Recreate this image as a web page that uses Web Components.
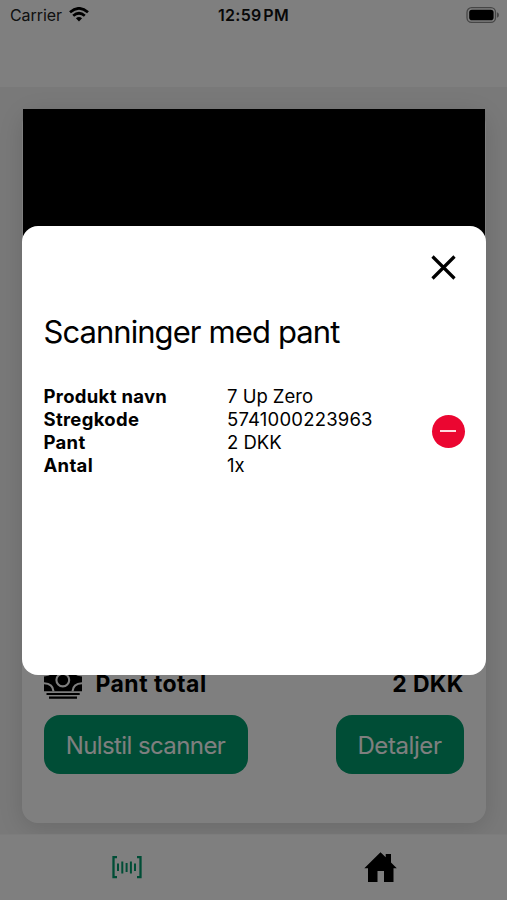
<!DOCTYPE html>
<html lang="da">
<head>
<meta charset="utf-8">
<title>Pant scanner</title>
<style>
html,body{margin:0;height:100%}
body{font-family:Inter,"Liberation Sans",sans-serif;color:#000;overflow:hidden}
</style>
</head>
<body>
<pant-app></pant-app>
<script>
const define = (name, html) => customElements.define(name, class extends HTMLElement {
  constructor() {
    super();
    this.attachShadow({mode: 'open'}).innerHTML = html;
  }
});

define('status-bar', `
<style>
:host{display:grid;grid-template-columns:1fr auto 1fr;align-items:center;height:30px;padding:0 8px 0 10px;font-size:16px;color:#000}
.left{display:flex;align-items:center;gap:7px}
.carrier{letter-spacing:-.08px;color:#222}
.time{font-weight:600;letter-spacing:.3px;word-spacing:-2.6px;color:#111;margin-right:2px}
svg{display:block;margin-top:-1px}
.battery{justify-self:end}
</style>
<div class="left"><span class="carrier">Carrier</span>
<svg width="20" height="15" viewBox="0 0 20 15" fill="none" stroke="#000" stroke-width="2.7"><path d="M1 5.3Q10-2.6 19 5.3"/><path d="M4.2 8.8Q10 3.7 15.8 8.8"/><path d="M6.9 11.2Q10 8.7 13.1 11.2L10 14.4Z" fill="#000" stroke="none"/></svg></div>
<span class="time">12:59 PM</span>
<svg class="battery" width="33" height="16" viewBox="0 0 33 16"><rect x="1" y=".7" width="28.5" height="14.6" rx="4.6" fill="none" stroke="#8c8c8c" stroke-width="1.3"/><rect x="3.2" y="2.8" width="24.4" height="10.4" rx="2.8"/><path d="M31 5.3Q33 6 33 8T31 10.7Z" fill="#8c8c8c"/></svg>`);

define('app-header', `
<style>:host{display:block;height:87px;box-sizing:border-box;background:#fff}</style><slot></slot>`);

define('pant-button', `
<style>
:host{display:flex;align-items:center;justify-content:center;box-sizing:border-box;height:59px;width:var(--w);padding-top:2px;background:#009b6c;color:#fff;border-radius:16px;font-size:24px;font-weight:400;letter-spacing:var(--ls,0)}
</style><slot></slot>`);

define('cash-icon', `
<style>:host{display:block;width:38px;height:31px}svg{display:block;margin-top:-1px}</style>
<svg width="38" height="31" viewBox="0 0 38 31"><path d="M0 0H38V23.3H0Z"/><g fill="none" stroke="#fff" stroke-width="2.1"><circle cx="18.8" cy="12" r="6.4"/><path d="M0 15.2Q9 15.5 9.5 23.3M38 15.2Q29 15.5 28.5 23.3M0 7.5Q9 7 9.5 0M38 7.5Q29 7 28.5 0"/></g><path d="M2.5 24.9H35.7V27H2.5ZM5 28.5H33V30.8H5Z"/></svg>`);

define('scanner-card', `
<style>
:host{display:flex;flex-direction:column;box-sizing:border-box;width:464px;height:714px;margin:22px auto 0;background:#fff;border-radius:16px;box-shadow:0 5px 24px rgba(0,0,0,.13)}
.camera{height:480px;margin:0 1px;background:#000}
.total{display:flex;align-items:center;height:34px;margin:78px 22px 0;font-size:23px;font-weight:700}
.total span{margin-left:14px;letter-spacing:.45px}
.total b{margin-left:auto;font-weight:700;letter-spacing:.3px}
.actions{display:flex;justify-content:space-between;margin:14px 22px 0}
</style>
<div class="camera"></div>
<div class="total"><cash-icon></cash-icon><span>Pant total</span><b>2 DKK</b></div>
<div class="actions"><pant-button style="--w:204px;--ls:-.6px">Nulstil scanner</pant-button><pant-button style="--w:128px;--ls:-.4px">Detaljer</pant-button></div>`);

define('tab-bar', `
<style>
:host{display:grid;grid-template-columns:1fr 1fr;justify-items:center;height:66px;box-sizing:border-box;background:#fff;border-top:1px solid #f8f8f8;padding-top:15px}
svg{display:block}
</style>
<svg width="34" height="34" viewBox="0 0 34 34" fill="none" stroke="#009b6c" stroke-width="2"><path d="M7 7.2H3.5V27.2H7M27 7.2H30.5V27.2H27" stroke-width="2.3"/><path d="M8 13.5V21M12.3 11.5V23.5M16.6 13V22M20.9 11.5V23.5M25 13.5V21"/></svg>
<svg width="34" height="34" viewBox="0 0 34 34"><path d="M1.3 18.3L17.5 2.3L22.7 7.3V4H28V12.5L33.8 18.3H30.5V32H21V21H14.5V32H5V18.3Z"/></svg>`);

define('remove-button', `
<style>:host{display:flex;width:33px;height:33px;border-radius:50%;background:#eb0631;align-items:center;justify-content:center}i{width:15.5px;height:2px;background:#ffd9e0}</style><i></i>`);

define('scan-item', `
<style>
:host{display:flex;align-items:center;justify-content:space-between}
dl{display:grid;grid-template-columns:183.5px auto;margin:0;font-size:18.5px;line-height:23px}
dt{font-weight:650;letter-spacing:.3px}dd{margin:0;letter-spacing:-.02px}
.code{letter-spacing:.2px}
dt,dd{white-space:nowrap}
</style>
<dl><dt>Produkt navn</dt><dd>7 Up Zero</dd><dt>Stregkode</dt><dd class="code">5741000223963</dd><dt>Pant</dt><dd>2 DKK</dd><dt>Antal</dt><dd>1x</dd></dl>
<remove-button></remove-button>`);

define('modal-dialog', `
<style>
:host{display:block;box-sizing:border-box;width:464px;height:449px;background:#fff;border-radius:16px;padding:29px 21.5px 0}
.close{display:block;margin:0 9px 0 auto}
h1{margin:32px 0 0;font-size:31px;line-height:40px;font-weight:400;letter-spacing:-.95px;word-spacing:.3px;white-space:nowrap}
scan-item{margin-top:33px}
</style>
<svg class="close" width="25" height="25" viewBox="0 0 25 25" stroke="#000" stroke-width="3.2"><path d="M1.5 1.5L23.5 23.5M23.5 1.5L1.5 23.5"/></svg>
<h1><slot></slot></h1>
<scan-item></scan-item>`);

define('pant-app', `
<style>
:host{display:flex;flex-direction:column;position:relative;width:507px;height:900px;background:#f2f2f2;overflow:hidden}
main{flex:1;min-height:0;overflow:hidden}
.overlay{position:absolute;inset:0;display:flex;align-items:center;justify-content:center;background:rgba(0,0,0,.5);padding:1px 0 0 1px}
</style>
<app-header><status-bar></status-bar></app-header>
<main><scanner-card></scanner-card></main>
<tab-bar></tab-bar>
<div class="overlay"><modal-dialog>Scanninger med pant</modal-dialog></div>`);
</script>
</body>
</html>
